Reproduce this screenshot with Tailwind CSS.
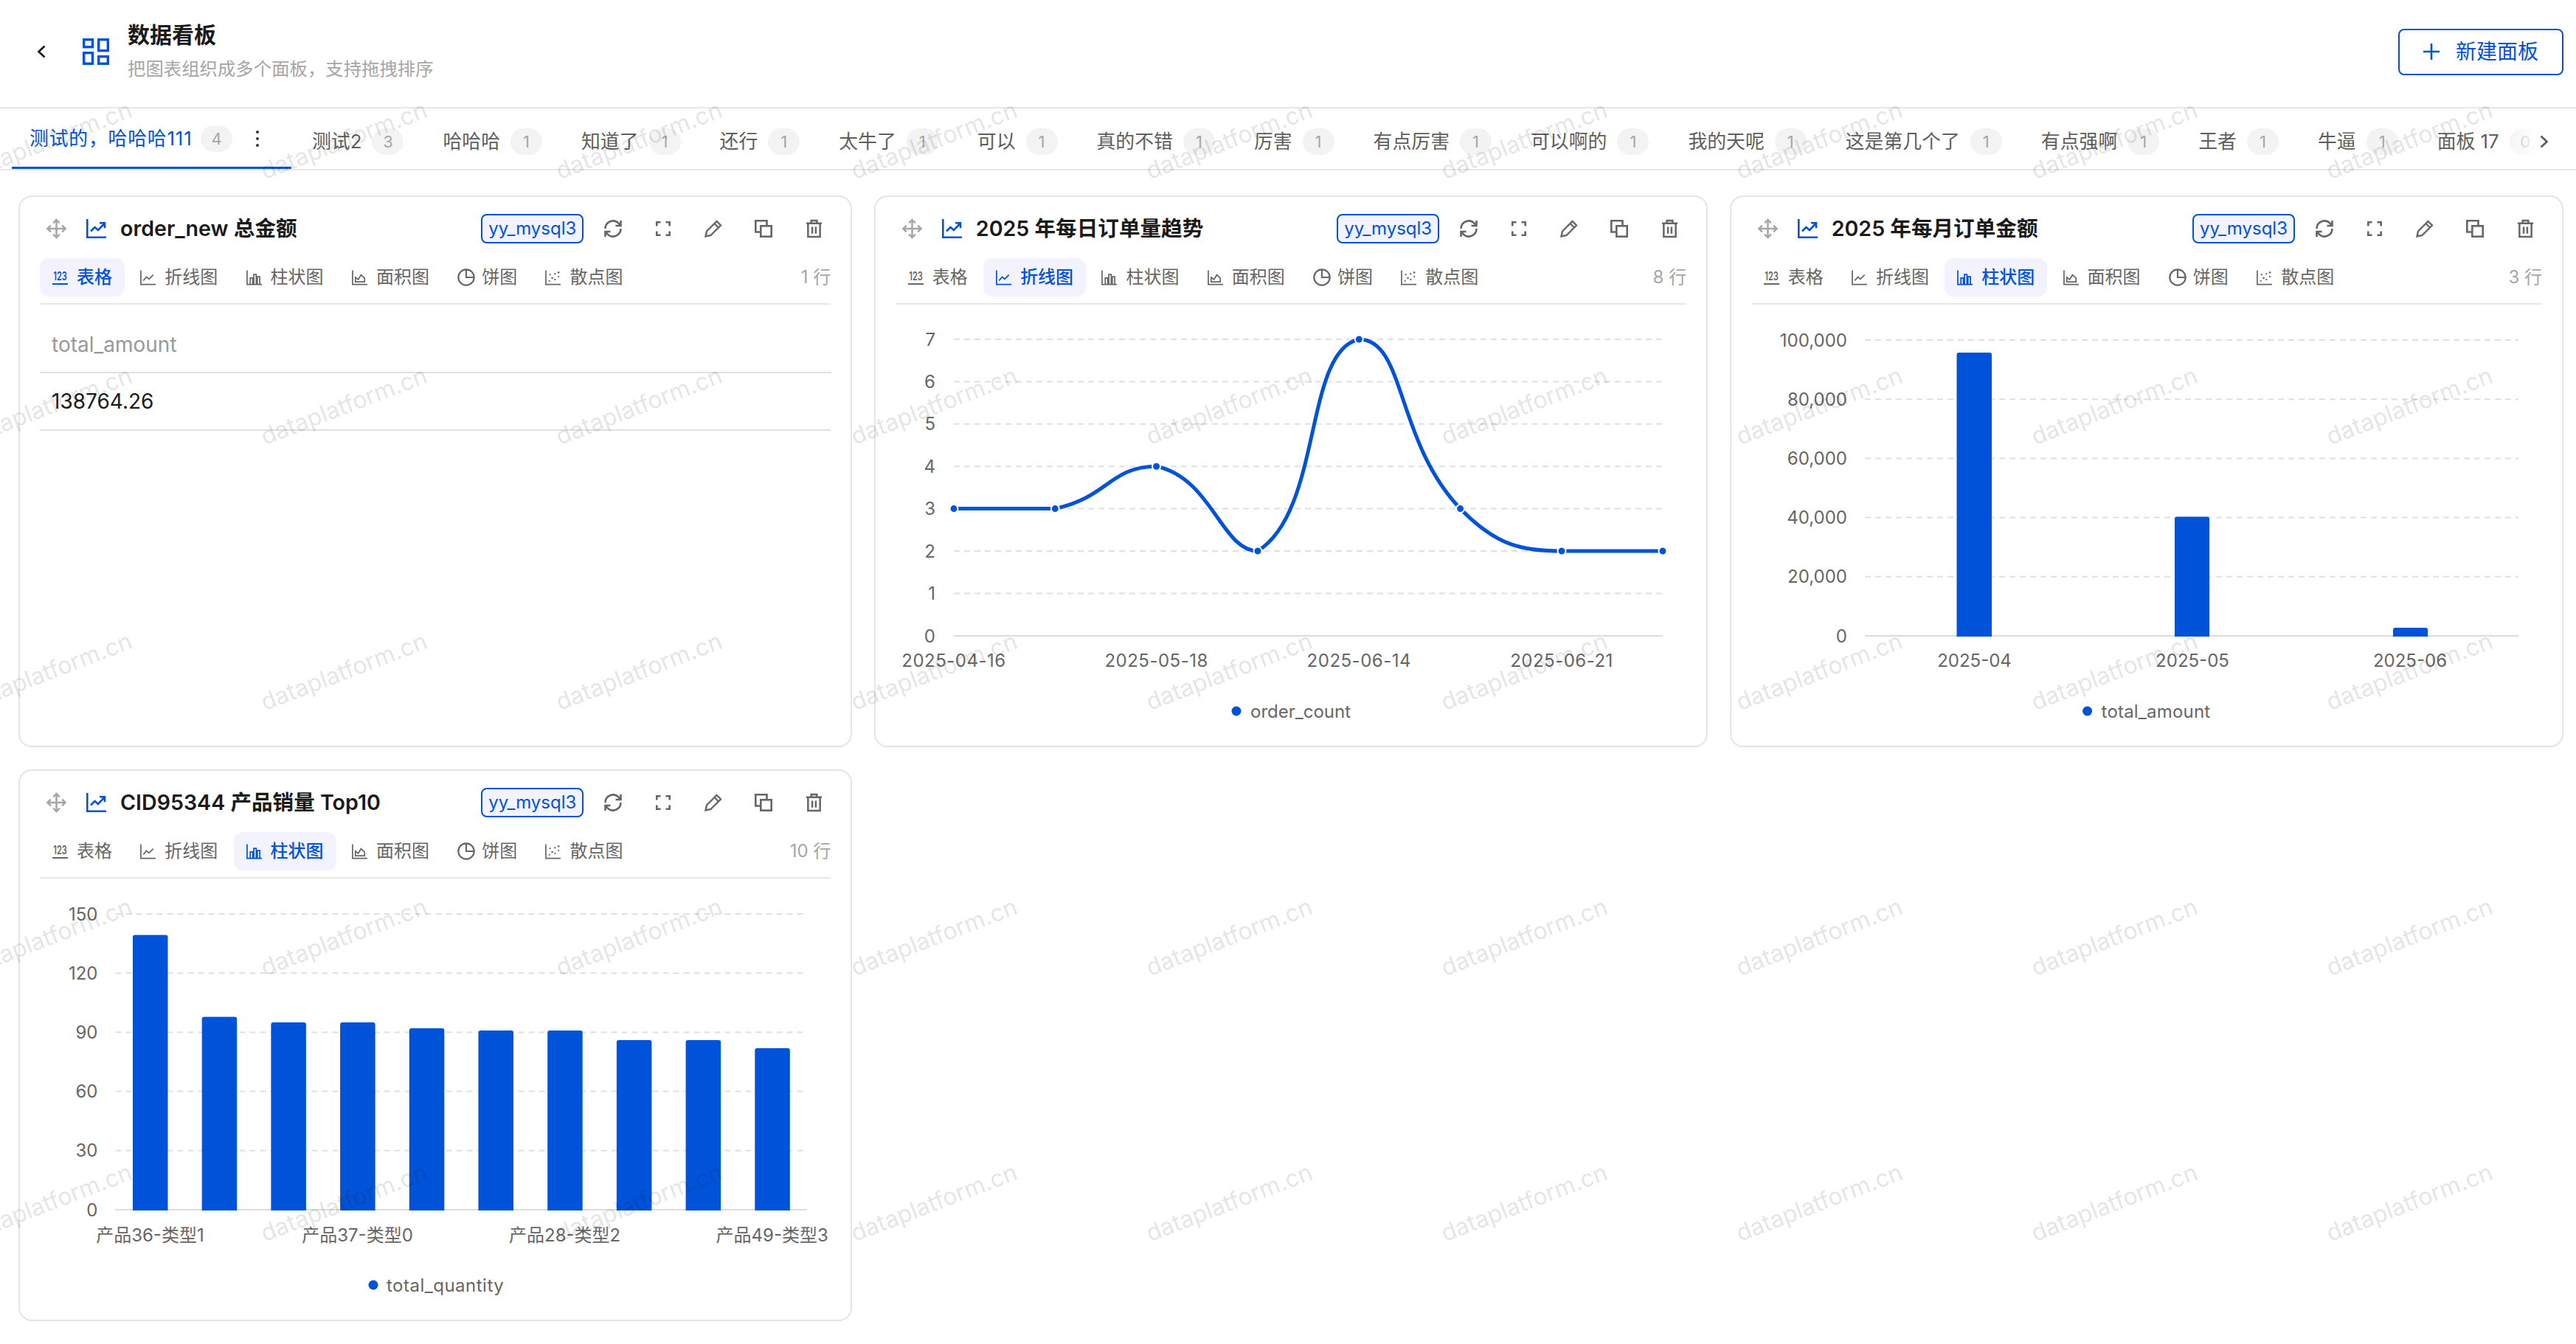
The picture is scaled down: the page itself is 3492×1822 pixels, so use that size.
<!DOCTYPE html>
<html lang="zh-CN">
<head>
  <meta charset="UTF-8" />
  <meta name="viewport" content="width=device-width, initial-scale=1.0" />
  <title>数据看板</title>
  <script src="https://cdn.jsdelivr.net/npm/@tailwindcss/browser@4"></script>
</head>
<body class="bg-white font-['Inter','Noto_Sans_CJK_SC',sans-serif] text-[#1a1a1a]">
  <!-- icon sprites -->
  <svg class="absolute w-0 h-0" aria-hidden="true">
    <symbol id="i-move" viewBox="0 0 30 30"><path d="M15 3v24M3 15h24M10.5 7 15 2.5 19.5 7M10.5 23l4.5 4.5 4.5-4.5M7 10.5 2.5 15 7 19.5M23 10.5l4.5 4.5-4.5 4.5" fill="none" stroke="currentColor" stroke-width="2.6"/></symbol>
    <symbol id="i-trend" viewBox="0 0 27 26"><path d="M1.3 0V24.7H27M6 16.5l5.5-5.5 4.5 4 8.5-9M18 5.2h7v7" fill="none" stroke="currentColor" stroke-width="2.6"/></symbol>
    <symbol id="t-line" viewBox="0 0 22 21"><path d="M1 0V20H22M4.5 14.5l4.5-5 3.5 3 6-6" fill="none" stroke="currentColor" stroke-width="1.8"/></symbol>
    <symbol id="t-bar" viewBox="0 0 22 21"><path d="M1 0V20H22M5.5 20V11H9v9M10.5 20V6H14v14M15.5 20V9H19v11" fill="none" stroke="currentColor" stroke-width="1.8"/></symbol>
    <symbol id="t-area" viewBox="0 0 22 21"><path d="M1 0V20H22M5 16.5V10l4 3 4-6.5 5 4.5v5.5z" fill="none" stroke="currentColor" stroke-width="1.8"/></symbol>
    <symbol id="t-pie" viewBox="0 0 22 22"><circle cx="11" cy="11" r="9.8" fill="none" stroke="currentColor" stroke-width="2"/><path d="M11 1.2V11H20.8" fill="none" stroke="currentColor" stroke-width="2"/></symbol>
    <symbol id="t-scatter" viewBox="0 0 22 21"><path d="M1 0V20H22" fill="none" stroke="currentColor" stroke-width="1.8"/><g fill="currentColor"><circle cx="6" cy="15" r="1.2"/><circle cx="10" cy="11" r="1.4"/><circle cx="7" cy="6" r="1.2"/><circle cx="14" cy="13" r="1.2"/><circle cx="14" cy="5" r="1.2"/><circle cx="19" cy="3" r="1.4"/><circle cx="19" cy="9" r="1.2"/></g></symbol>
    <symbol id="a-refresh" viewBox="0 0 26 26"><path d="M2.5 13a10.5 10.5 0 0 1 18-7.3L23 8.5M23.5 2v7h-7M23.5 13a10.5 10.5 0 0 1-18 7.3L3 17.5M2.5 24v-7h7" fill="none" stroke="currentColor" stroke-width="2.6"/></symbol>
    <symbol id="a-full" viewBox="0 0 20 20"><path d="M1.3 6.5V1.3h5.2M13.5 1.3h5.2v5.2M18.7 13.5v5.2h-5.2M6.5 18.7H1.3v-5.2" fill="none" stroke="currentColor" stroke-width="2.6"/></symbol>
    <symbol id="a-edit" viewBox="0 0 24 24"><path d="M1.5 22.5 3 15.5 16.5 2l5.5 5.5L8.5 21zM13.5 5l5.5 5.5" fill="none" stroke="currentColor" stroke-width="2.4"/></symbol>
    <symbol id="a-copy" viewBox="0 0 24 24"><path d="M8 16.5H1.3V1.3H16.5V8" fill="none" stroke="currentColor" stroke-width="2.6"/><rect x="8.3" y="8.3" width="14.4" height="14.4" fill="none" stroke="currentColor" stroke-width="2.6"/></symbol>
    <symbol id="a-trash" viewBox="0 0 24 26"><path d="M1 5.5H23M8 5V1.5h8V5M3.5 6V24.5H20.5V6M9.5 10.5v9.5M14.5 10.5v9.5" fill="none" stroke="currentColor" stroke-width="2.6"/></symbol>
  </svg>

  <div class="relative w-full h-[1822px] overflow-hidden">
    <!-- top bar -->
    <header class="flex items-center h-[145px] pb-[5px] pl-[50px] pr-[17px]">
      <svg class="w-[12px] h-[18px] text-[#1a1a1a]" viewBox="0 0 12 18"><path d="M10.5 1.5 2.5 9l8 7.5" fill="none" stroke="currentColor" stroke-width="2.6"/></svg>
      <svg class="ml-[50px] w-[36px] h-[36px] text-[#0052d9]" viewBox="0 0 36 36">
        <g fill="none" stroke="currentColor" stroke-width="3.4">
          <rect x="1.7" y="1.7" width="11.8" height="10"/>
          <rect x="21.7" y="1.7" width="12.6" height="15"/>
          <rect x="1.7" y="19.7" width="11.8" height="14.6"/>
          <rect x="21.7" y="24.7" width="12.6" height="9.6"/>
        </g>
      </svg>
      <div class="ml-[25px] flex flex-col gap-[14px]">
        <h1 class="text-[30px] leading-[32px] font-semibold">数据看板</h1>
        <p class="text-[24.4px] leading-[32px] text-[#a6a6a6]">把图表组织成多个面板，支持拖拽排序</p>
      </div>
      <button class="ml-auto w-[224px] h-[63px] flex items-center justify-center gap-[22px] border-2 border-[#0052d9] rounded-lg text-[#0052d9] text-[28px]">
        <svg class="w-[22px] h-[22px]" viewBox="0 0 22 22"><path d="M11 0v22M0 11h22" fill="none" stroke="currentColor" stroke-width="2.6"/></svg>
        新建面板
      </button>
    </header>

    <!-- panel tabs -->
    <nav class="flex h-[86px] border-y-2 border-[#e7e7e7]">
      <div class="relative flex-1 min-w-0 overflow-hidden flex pl-4">
        <div class="relative shrink-0 w-[379px] flex items-center pl-[24px] text-[25.85px] text-[#0052d9]">
          <span class="w-[219px] whitespace-nowrap tracking-[0.8px]">测试的，哈哈哈111</span>
          <span class="ml-[13px] w-[43px] h-[36px] rounded-full bg-[#f3f3f3] flex items-center justify-center text-[22px] text-[#a6a6a6]">4</span>
          <span class="ml-[32px] flex flex-col gap-[5px]"><i class="w-[4px] h-[4px] rounded-full bg-[#333]"></i><i class="w-[4px] h-[4px] rounded-full bg-[#333]"></i><i class="w-[4px] h-[4px] rounded-full bg-[#333]"></i></span>
          <span class="absolute left-0 right-0 bottom-[-1px] h-[4px] bg-[#0052d9]"></span>
        </div>
        <div id="tabs" class="flex pl-[1.5px]"></div>
        <div class="absolute right-0 top-0 bottom-0 w-[44px] bg-gradient-to-r from-white/0 to-white"></div>
      </div>
      <div class="w-[52px] flex items-center pt-2 pl-[3px]">
        <svg class="w-[12px] h-[18px] text-[#5e5e5e]" viewBox="0 0 12 18"><path d="M1.5 1.5 9.5 9l-8 7.5" fill="none" stroke="currentColor" stroke-width="2.8"/></svg>
      </div>
    </nav>

    <!-- cards -->
    <main id="cards" class="grid grid-cols-3 gap-x-[29.5px] gap-y-[30px] pl-[25px] pr-[17px] pt-[34px]"></main>

    <!-- watermark -->
    <svg class="absolute inset-0 w-full h-full pointer-events-none">
      <defs>
        <pattern id="wm" x="-134" y="10" width="400" height="360" patternUnits="userSpaceOnUse">
          <text x="200" y="180" transform="rotate(-21 200 180)" text-anchor="middle" dominant-baseline="central" font-size="32" fill="#000" fill-opacity="0.1">dataplatform.cn</text>
        </pattern>
      </defs>
      <rect width="100%" height="100%" fill="url(#wm)" />
    </svg>
  </div>

  <!-- chart bodies -->
  <template id="body-table">
    <div class="mx-[27px] mt-[36px] text-[28px]">
      <div class="h-[57px] flex items-center pl-[16px] pb-[19px] border-b-2 border-[#e0e0e0] text-[#999]">total_amount</div>
      <div class="h-[78px] flex items-center pl-[16px] border-b-2 border-[#e0e0e0]">138764.26</div>
    </div>
  </template>

  <template id="body-line">
    <svg class="block w-[1126px] h-[590px]" viewBox="2 0 1126 590" font-size="24" fill="#666">
      <g stroke="#e0e0e0" stroke-width="2" stroke-dasharray="8 6">
        <path d="M108 47H1069M108 104.4H1069M108 161.8H1069M108 219.2H1069M108 276.6H1069M108 334H1069M108 391.4H1069"/>
      </g>
      <path d="M108 449H1069" stroke="#dcdcdc" stroke-width="2"/>
      <g text-anchor="end" dominant-baseline="central">
        <text x="83" y="47">7</text><text x="83" y="104.4">6</text><text x="83" y="161.8">5</text><text x="83" y="219.2">4</text><text x="83" y="276.6">3</text><text x="83" y="334">2</text><text x="83" y="391.4">1</text><text x="83" y="449">0</text>
      </g>
      <g text-anchor="middle" dominant-baseline="central" letter-spacing="0.5">
        <text x="108" y="482">2025-04-16</text><text x="382.6" y="482">2025-05-18</text><text x="657.3" y="482">2025-06-14</text><text x="932" y="482">2025-06-21</text>
      </g>
      <path d="M108 276.6L245.3 276.6C316.3 261.6 320.6 219.2 382.6 219.2C457.6 234.8 471 334 520 334C608 279 582.3 62.5 657.3 47C720.3 47 706.6 184.6 794.6 276.6C843.6 327.6 880 334 932 334L1069 334" fill="none" stroke="#0052d9" stroke-width="5"/>
      <g fill="#0052d9" stroke="#fff" stroke-width="2">
        <circle cx="108" cy="276.6" r="5.5"/><circle cx="245.3" cy="276.6" r="5.5"/><circle cx="382.6" cy="219.2" r="5.5"/><circle cx="520" cy="334" r="5.5"/><circle cx="657.3" cy="47" r="5.5"/><circle cx="794.6" cy="276.6" r="5.5"/><circle cx="932" cy="334" r="5.5"/><circle cx="1069" cy="334" r="5.5"/>
      </g>
      <circle cx="491" cy="551" r="6.5" fill="#0052d9"/>
      <text x="510" y="551" dominant-baseline="central">order_count</text>
    </svg>
  </template>

  <template id="body-month">
    <svg class="block w-[1126px] h-[590px]" viewBox="2 0 1126 590" font-size="24" fill="#666">
      <g stroke="#e0e0e0" stroke-width="2" stroke-dasharray="8 6">
        <path d="M183 48H1069M183 128.2H1069M183 208.4H1069M183 288.6H1069M183 368.8H1069"/>
      </g>
      <path d="M183 449H1069" stroke="#dcdcdc" stroke-width="2"/>
      <g text-anchor="end" dominant-baseline="central">
        <text x="159" y="48">100,000</text><text x="159" y="128.2">80,000</text><text x="159" y="208.4">60,000</text><text x="159" y="288.6">40,000</text><text x="159" y="368.8">20,000</text><text x="159" y="449">0</text>
      </g>
      <g text-anchor="middle" dominant-baseline="central">
        <text x="331.5" y="482">2025-04</text><text x="627" y="482">2025-05</text><text x="922" y="482">2025-06</text>
      </g>
      <g fill="#0052d9">
        <path d="M307.5 450V68q0-3 3-3h41.5q3 0 3 3V450z"/>
        <path d="M603 450V290.5q0-3 3-3h41q3 0 3 3V450z"/>
        <path d="M899 450V441q0-3 3-3h41q3 0 3 3V450z"/>
      </g>
      <circle cx="484.6" cy="551" r="6.5" fill="#0052d9"/>
      <text x="503.6" y="551" dominant-baseline="central" letter-spacing="0.2">total_amount</text>
    </svg>
  </template>

  <template id="body-top">
    <svg class="block w-[1126px] h-[590px]" viewBox="2 0 1126 590" font-size="24" fill="#666">
      <g stroke="#e0e0e0" stroke-width="2" stroke-dasharray="8 6">
        <path d="M131.5 48H1068.5M131.5 128.2H1068.5M131.5 208.4H1068.5M131.5 288.6H1068.5M131.5 368.8H1068.5"/>
      </g>
      <path d="M131.5 449H1068.5" stroke="#dcdcdc" stroke-width="2"/>
      <g text-anchor="end" dominant-baseline="central">
        <text x="107.5" y="48">150</text><text x="107.5" y="128.2">120</text><text x="107.5" y="208.4">90</text><text x="107.5" y="288.6">60</text><text x="107.5" y="368.8">30</text><text x="107.5" y="449">0</text>
      </g>
      <g text-anchor="middle" dominant-baseline="central">
        <text x="178.4" y="483">产品36-类型1</text><text x="459.5" y="483">产品37-类型0</text><text x="740.6" y="483">产品28-类型2</text><text x="1021.7" y="483">产品49-类型3</text>
      </g>
      <g fill="#0052d9">
        <path d="M155 450V79.4q0-3 3-3h41.5q3 0 3 3V450z"/>
        <path d="M248.7 450V190.5q0-3 3-3h41.5q3 0 3 3V450z"/>
        <path d="M342.4 450V198q0-3 3-3h41.5q3 0 3 3V450z"/>
        <path d="M436.1 450V198q0-3 3-3h41.5q3 0 3 3V450z"/>
        <path d="M529.8 450V206q0-3 3-3h41.5q3 0 3 3V450z"/>
        <path d="M623.5 450V209q0-3 3-3h41.5q3 0 3 3V450z"/>
        <path d="M717.2 450V209q0-3 3-3h41.5q3 0 3 3V450z"/>
        <path d="M810.9 450V222q0-3 3-3h41.5q3 0 3 3V450z"/>
        <path d="M904.6 450V222q0-3 3-3h41.5q3 0 3 3V450z"/>
        <path d="M998.3 450V233q0-3 3-3h41.5q3 0 3 3V450z"/>
      </g>
      <circle cx="481" cy="551" r="6.5" fill="#0052d9"/>
      <text x="499" y="551" dominant-baseline="central" letter-spacing="0.5">total_quantity</text>
    </svg>
  </template>

  <script>
    const panels = [
      ['测试2', 3], ['哈哈哈', 1], ['知道了', 1], ['还行', 1], ['太牛了', 1], ['可以', 1], ['真的不错', 1], ['厉害', 1],
      ['有点厉害', 1], ['可以啊的', 1], ['我的天呢', 1], ['这是第几个了', 1], ['有点强啊', 1], ['王者', 1], ['牛逼', 1], ['面板 17', 0]
    ];
    document.getElementById('tabs').innerHTML = panels.map(([name, count]) => `
      <div class="shrink-0 flex items-center pt-2 px-[26.5px] text-[25.85px] text-[#5e5e5e] whitespace-nowrap">
        <span>${name}</span>
        <span class="ml-[14px] w-[43px] h-[36px] rounded-full bg-[#f3f3f3] flex items-center justify-center text-[22px] text-[#a6a6a6]">${count}</span>
      </div>`).join('');

    const chartTabs = [
      ['表格', null], ['折线图', 't-line'], ['柱状图', 't-bar'], ['面积图', 't-area'], ['饼图', 't-pie'], ['散点图', 't-scatter']
    ];
    const tabIcon = (id) => {
      if (!id) return `<svg class="w-[21px] h-[21px]" viewBox="0 0 21 21"><text transform="scale(1 1.4)" x="10.5" y="10" text-anchor="middle" font-size="11" font-weight="600" fill="currentColor">123</text><path d="M0 19h21" stroke="currentColor" stroke-width="2"/></svg>`;
      if (id === 't-pie') return `<svg class="w-[24px] h-[24px] -mr-[3px]"><use href="#t-pie"/></svg>`;
      return `<svg class="w-[21px] h-[21px]"><use href="#${id}"/></svg>`;
    };

    const actions = ['a-refresh', 'a-full', 'a-edit', 'a-copy', 'a-trash'];
    const actionSizes = { 'a-refresh': 'w-[26px] h-[26px]', 'a-full': 'w-[20px] h-[20px]', 'a-edit': 'w-[24px] h-[24px]', 'a-copy': 'w-[24px] h-[24px]', 'a-trash': 'w-[23px] h-[26px]' };

    const cards = [
      { title: 'order_new 总金额', active: 0, rows: '1 行', body: 'body-table' },
      { title: '2025 年每日订单量趋势', active: 1, rows: '8 行', body: 'body-line' },
      { title: '2025 年每月订单金额', active: 2, rows: '3 行', body: 'body-month' },
      { title: 'CID95344 产品销量 Top10', active: 2, rows: '10 行', body: 'body-top' }
    ];

    document.getElementById('cards').innerHTML = cards.map(card => `
      <section class="h-[748px] border-2 border-[#e5e5e5] rounded-[18px] pt-[23px] overflow-hidden">
        <div class="flex items-center h-[40px] mx-[27px] pl-[8px]">
          <svg class="w-[29px] h-[30px] text-[#a6a6a6]"><use href="#i-move"/></svg>
          <svg class="ml-[26px] w-[27px] h-[26px] text-[#0052d9]"><use href="#i-trend"/></svg>
          <h2 class="ml-[19px] text-[28.6px] font-semibold whitespace-nowrap">${card.title}</h2>
          <span class="ml-auto w-[139px] h-[40px] flex items-center justify-center border-2 border-[#0052d9] rounded-lg bg-[#f2f3ff] text-[24px] text-[#0052d9]">yy_mysql3</span>
          <div class="ml-[17px] flex gap-[22px] text-[#666]">
            ${actions.map(a => `<span class="w-[46px] h-[40px] flex items-center justify-center"><svg class="${actionSizes[a]}"><use href="#${a}"/></svg></span>`).join('')}
          </div>
        </div>
        <div class="flex items-center gap-[4.3px] mx-[27px] mt-[20px] pb-[9px] border-b-2 border-[#e7e7e7]">
          ${chartTabs.map(([label, icon], i) => i === card.active
            ? `<span class="flex items-center gap-[12px] h-[52px] px-[17px] rounded-[12px] bg-[#f2f3ff] text-[#0052d9] text-[24px] font-medium">${tabIcon(icon)}${label}</span>`
            : `<span class="flex items-center gap-[12px] h-[52px] px-[17px] text-[#666] text-[24px]">${tabIcon(icon)}${label}</span>`).join('')}
          <span class="ml-auto text-[24px] text-[#a6a6a6]">${card.rows}</span>
        </div>
        ${document.getElementById(card.body).innerHTML}
      </section>`).join('');
  </script>
</body>
</html>
